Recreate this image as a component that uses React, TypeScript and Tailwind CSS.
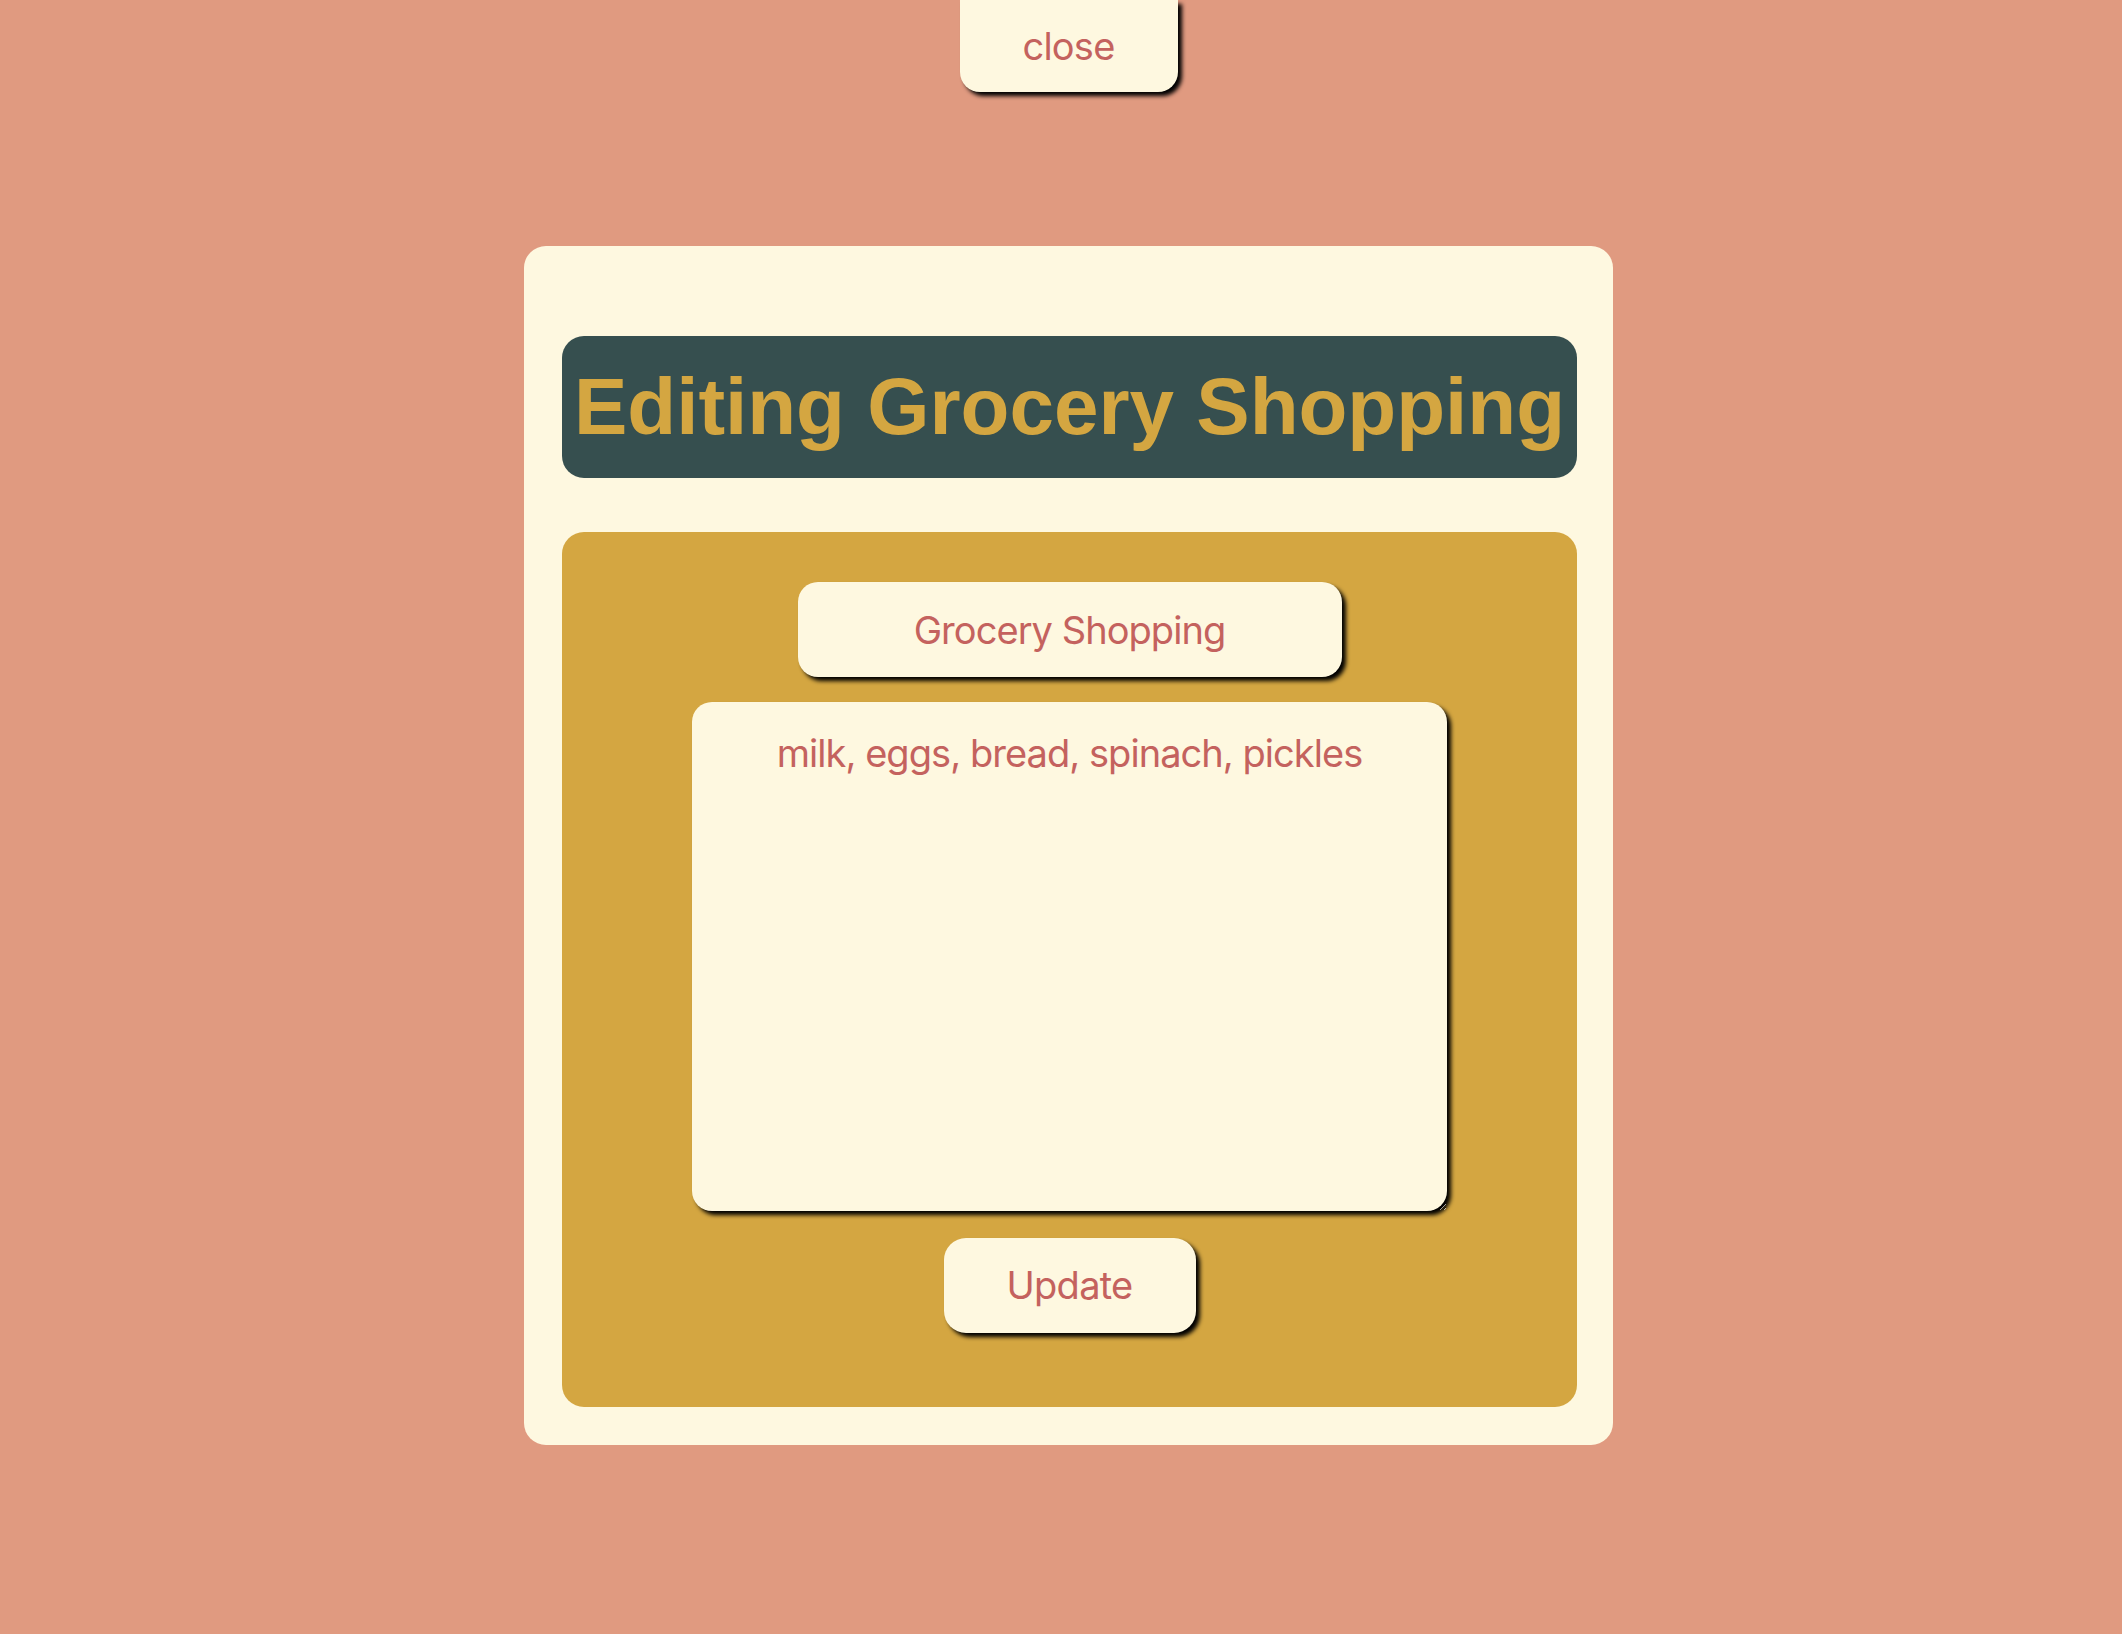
import React from "react";

export default function App() {
  return (
    <div
      className="min-h-[1634px] w-full bg-[#E09A80] pl-[15px]"
      style={{ fontFamily: "Inter, 'Noto Sans', sans-serif" }}
    >
      <div className="flex flex-col items-center">
        <button
          type="button"
          className="flex h-[92px] w-[218px] items-center justify-center rounded-b-[20px] bg-[#FEF8E0] text-[38px] tracking-[-0.02em] text-[#C4625E] shadow-[4px_4px_4px_#000]"
        >
          close
        </button>

        <div className="mt-[154px] w-[1089px] rounded-[22px] bg-[#FEF8E0] pb-[38px] pl-[38px] pr-[36px] pt-[90px]">
          <div className="flex h-[142px] items-center justify-center rounded-[22px] bg-[#364F4F]">
            <h1
              className="whitespace-nowrap text-[80px] font-bold leading-none text-[#D4A641]"
              style={{ fontFamily: "'Liberation Sans', Arial, sans-serif" }}
            >
              Editing Grocery Shopping
            </h1>
          </div>

          <div className="mt-[54px] flex h-[875px] flex-col items-center rounded-[22px] bg-[#D4A641] pt-[50px]">
            <input
              type="text"
              defaultValue="Grocery Shopping"
              className="h-[95px] w-[544px] rounded-[20px] border-0 bg-[#FEF8E0] text-center text-[38px] tracking-[-0.025em] text-[#C4625E] shadow-[4px_4px_4px_#000] outline-none"
            />
            <textarea
              defaultValue="milk, eggs, bread, spinach, pickles"
              className="mt-[25px] block h-[509px] w-[755px] resize rounded-[20px] border-0 bg-[#FEF8E0] px-4 pt-[23px] text-center text-[38px] tracking-[-0.025em] text-[#C4625E] shadow-[4px_4px_4px_#000] outline-none"
            />
            <button
              type="button"
              className="mt-[27px] flex h-[95px] w-[252px] items-center justify-center rounded-[22px] bg-[#FEF8E0] text-[38px] tracking-[-0.02em] text-[#C4625E] shadow-[4px_4px_4px_#000]"
            >
              Update
            </button>
          </div>
        </div>
      </div>
    </div>
  );
}
